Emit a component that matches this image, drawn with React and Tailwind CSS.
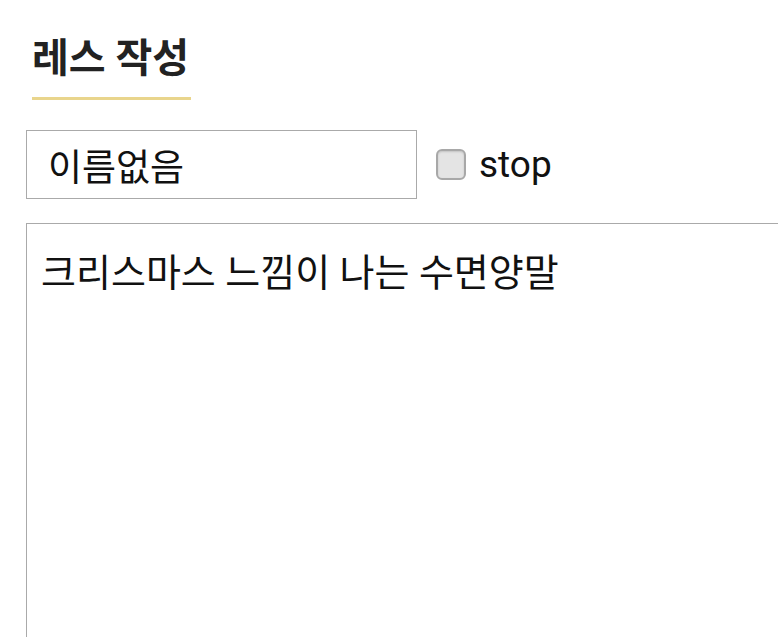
import React from 'react';

const App = () => {
    return (
        <div className="w-[778px] h-[637px] overflow-hidden bg-white text-[#111] font-['Roboto','Noto_Sans_CJK_KR',sans-serif]">
            {/* Title with underline */}
            <div className="pt-[35px] pl-[32px]">
                <h1 className="inline-block text-[40px] leading-[48px] font-bold text-[#222] border-b-[3px] border-[#e9d58c] pb-[14px] pr-[2px]">
                    레스 작성
                </h1>
            </div>

            {/* Name + stop checkbox */}
            <div className="flex items-center mt-[30px] pl-[26px]">
                <input
                    type="text"
                    defaultValue="이름없음"
                    className="w-[391px] h-[69px] border border-[#aaa] px-[21px] text-[37px] text-[#111] outline-none"
                />
                <label className="flex items-center ml-[19px] gap-[13px] text-[37px]">
                    <span className="w-[30px] h-[31px] rounded-[6px] border-2 border-[#a8a8a8] bg-[#e4e4e4] shadow-[inset_0_1px_2px_rgba(0,0,0,0.15)]" />
                    <span>stop</span>
                </label>
            </div>

            {/* Body */}
            <div className="mt-[24px] ml-[26px] h-[420px] border-t border-l border-[#aaa] px-[14px] pt-[25px]">
                <p className="text-[38px] leading-[48px]">크리스마스 느낌이 나는 수면양말</p>
            </div>
        </div>
    );
};

export default App;
